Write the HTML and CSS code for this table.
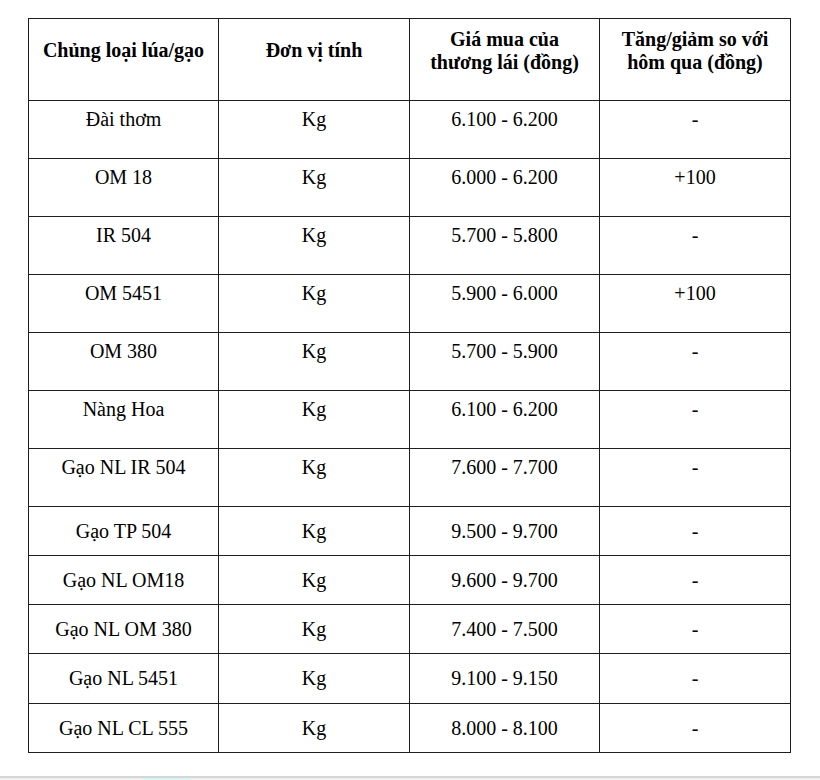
FILE: index.html
```html
<!DOCTYPE html>
<html lang="vi">
<head>
<meta charset="utf-8">
<title>Giá lúa gạo</title>
<link rel="stylesheet" href="styles.css">
</head>
<body>
<div class="page">
  <div class="table">
    <div class="cell head">Chủng loại lúa/gạo</div>
    <div class="cell head">Đơn vị tính</div>
    <div class="cell head">Giá mua của<br>thương lái (đồng)</div>
    <div class="cell head">Tăng/giảm so với<br>hôm qua (đồng)</div>

    <div class="cell top">Đài thơm</div><div class="cell top">Kg</div><div class="cell top">6.100 - 6.200</div><div class="cell top">-</div>
    <div class="cell top">OM 18</div><div class="cell top">Kg</div><div class="cell top">6.000 - 6.200</div><div class="cell top">+100</div>
    <div class="cell top">IR 504</div><div class="cell top">Kg</div><div class="cell top">5.700 - 5.800</div><div class="cell top">-</div>
    <div class="cell top">OM 5451</div><div class="cell top">Kg</div><div class="cell top">5.900 - 6.000</div><div class="cell top">+100</div>
    <div class="cell top">OM 380</div><div class="cell top">Kg</div><div class="cell top">5.700 - 5.900</div><div class="cell top">-</div>
    <div class="cell top">Nàng Hoa</div><div class="cell top">Kg</div><div class="cell top">6.100 - 6.200</div><div class="cell top">-</div>
    <div class="cell top">Gạo NL IR 504</div><div class="cell top">Kg</div><div class="cell top">7.600 - 7.700</div><div class="cell top">-</div>
    <div class="cell">Gạo TP 504</div><div class="cell">Kg</div><div class="cell">9.500 - 9.700</div><div class="cell">-</div>
    <div class="cell">Gạo NL OM18</div><div class="cell">Kg</div><div class="cell">9.600 - 9.700</div><div class="cell">-</div>
    <div class="cell">Gạo NL OM 380</div><div class="cell">Kg</div><div class="cell">7.400 - 7.500</div><div class="cell">-</div>
    <div class="cell">Gạo NL 5451</div><div class="cell">Kg</div><div class="cell">9.100 - 9.150</div><div class="cell">-</div>
    <div class="cell">Gạo NL CL 555</div><div class="cell">Kg</div><div class="cell">8.000 - 8.100</div><div class="cell">-</div>
  </div>
  <div class="bar"><span class="bar-mark"></span></div>
</div>
</body>
</html>
```

FILE: styles.css
```css
html, body {
  margin: 0;
  padding: 0;
  background: #ffffff;
}

body {
  font-family: "Liberation Serif", "Times New Roman", serif;
  color: #000;
  width: 820px;
  height: 780px;
  overflow: hidden;
}

.page {
  padding-top: 18px;
}

.table {
  margin-left: 28px;
  width: 763px;
  box-sizing: border-box;
  display: grid;
  grid-template-columns: 189px 190px 189px 190px;
  grid-template-rows: 81px 57px 57px 57px 57px 57px 57px 57px 48px 48px 48px 49px 48px;
  gap: 1px;
  padding: 1px;
  background: #1e1e1e;
}

.cell {
  background: #ffffff;
  display: flex;
  align-items: center;
  justify-content: center;
  text-align: center;
  font-size: 20px;
  line-height: 23px;
}

.cell.head {
  font-weight: bold;
  padding-bottom: 18px;
}

.cell.top {
  align-items: flex-start;
  padding-top: 7px;
}

.bar {
  margin-top: 23px;
  height: 2px;
  border-top: 2px solid #d6d6d6;
  background: #f0f0f0;
  display: flex;
}

.bar-mark {
  margin-left: 143px;
  width: 47px;
  height: 2px;
  background: #d8f7f4;
}
```
